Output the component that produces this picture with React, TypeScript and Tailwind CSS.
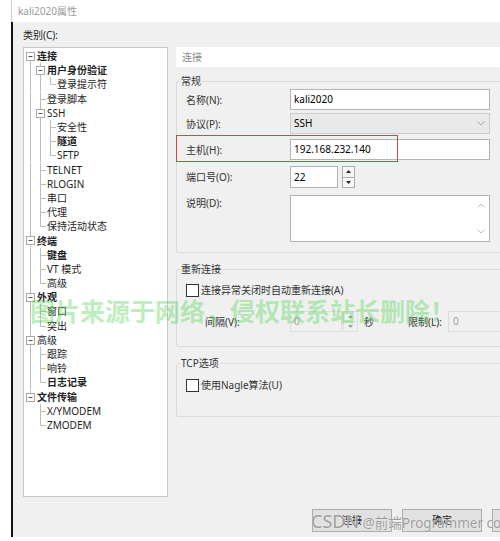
import React from "react";

interface TreeItem {
  label: string;
  level: number;
  bold?: boolean;
  expander?: boolean;
}

const treeItems: TreeItem[] = [
  { label: "连接", level: 0, bold: true, expander: true },
  { label: "用户身份验证", level: 1, bold: true, expander: true },
  { label: "登录提示符", level: 2 },
  { label: "登录脚本", level: 1 },
  { label: "SSH", level: 1, expander: true },
  { label: "安全性", level: 2 },
  { label: "隧道", level: 2, bold: true },
  { label: "SFTP", level: 2 },
  { label: "TELNET", level: 1 },
  { label: "RLOGIN", level: 1 },
  { label: "串口", level: 1 },
  { label: "代理", level: 1 },
  { label: "保持活动状态", level: 1 },
  { label: "终端", level: 0, bold: true, expander: true },
  { label: "键盘", level: 1, bold: true },
  { label: "VT 模式", level: 1 },
  { label: "高级", level: 1 },
  { label: "外观", level: 0, bold: true, expander: true },
  { label: "窗口", level: 1 },
  { label: "突出", level: 1 },
  { label: "高级", level: 0, expander: true },
  { label: "跟踪", level: 1 },
  { label: "响铃", level: 1 },
  { label: "日志记录", level: 1, bold: true },
  { label: "文件传输", level: 0, bold: true, expander: true },
  { label: "X/YMODEM", level: 1 },
  { label: "ZMODEM", level: 1 },
];

const ROW_H = 14.2;

const hasNext = (i: number) => {
  const level = treeItems[i].level;
  for (let j = i + 1; j < treeItems.length; j++) {
    if (treeItems[j].level < level) return false;
    if (treeItems[j].level === level) return true;
  }
  return false;
};

const ancestorHasNext = (i: number, k: number) => {
  for (let j = i - 1; j >= 0; j--) {
    if (treeItems[j].level === k) return hasNext(j);
  }
  return false;
};

const TreeRow: React.FC<{ item: TreeItem; index: number }> = ({ item, index }) => {
  const L = item.level;
  const w = (L + 1) * 10;
  const cx = L * 10 + 4.5;
  const parts: React.ReactNode[] = [];

  for (let k = 0; k < L; k++) {
    if (ancestorHasNext(index, k)) {
      parts.push(<line key={"a" + k} x1={k * 10 + 4.5} x2={k * 10 + 4.5} y1={0} y2={ROW_H} />);
    }
  }
  if (!(L === 0 && index === 0)) parts.push(<line key="t" x1={cx} x2={cx} y1={0} y2={7.5} />);
  if (hasNext(index)) parts.push(<line key="b" x1={cx} x2={cx} y1={7.5} y2={ROW_H} />);
  if (!item.expander) parts.push(<line key="h" x1={cx} x2={L * 10 + 10} y1={7.5} y2={7.5} />);

  return (
    <div className="flex items-center h-[14.2px]">
      <svg width={w} height={ROW_H} className="shrink-0" stroke="#bcbcbc" strokeWidth={1}>
        {parts}
        {item.expander && (
          <g>
            <rect x={L * 10 + 0.5} y={3.5} width={8} height={8} fill="#fff" stroke="#a8a8a8" />
            <line x1={L * 10 + 2.5} x2={L * 10 + 6.5} y1={7.5} y2={7.5} stroke="#555" />
          </g>
        )}
      </svg>
      <span
        className={
          "ml-[1px] text-[10px] leading-[14px] whitespace-nowrap text-[#1e1e1e] " +
          (item.bold ? "font-bold" : "")
        }
      >
        {item.label}
      </span>
    </div>
  );
};

const Chevron: React.FC<{ up?: boolean; color?: string }> = ({ up, color = "#a8a8a8" }) => (
  <svg width="8" height="5" viewBox="0 0 8 5" fill="none" stroke={color} strokeWidth={1}>
    {up ? <polyline points="0.5,4.5 4,1 7.5,4.5" /> : <polyline points="0.5,0.5 4,4 7.5,0.5" />}
  </svg>
);

const Triangle: React.FC<{ up?: boolean; color?: string }> = ({ up, color = "#222" }) => (
  <svg width="5" height="3" viewBox="0 0 5 3" fill={color}>
    {up ? <polygon points="0,3 2.5,0 5,3" /> : <polygon points="0,0 2.5,3 5,0" />}
  </svg>
);

const SpinButtons: React.FC<{ disabled?: boolean; w: string }> = ({ disabled, w }) => (
  <div className={"flex flex-col h-full " + w}>
    <div
      className={
        "flex-1 flex items-center justify-center border " +
        (disabled ? "border-[#dedede] bg-[#f0f0f0]" : "border-[#adadad] bg-[#f7f7f7]")
      }
    >
      <Triangle up color={disabled ? "#a0a0a0" : "#222"} />
    </div>
    <div
      className={
        "flex-1 flex items-center justify-center border border-t-0 " +
        (disabled ? "border-[#dedede] bg-[#f0f0f0]" : "border-[#adadad] bg-[#f7f7f7]")
      }
    >
      <Triangle color={disabled ? "#a0a0a0" : "#222"} />
    </div>
  </div>
);

const labelCls = "w-[104px] shrink-0 text-[10px] leading-[16px] text-[#333] whitespace-nowrap";
const inputCls =
  "w-[200px] border border-[#b4b4b4] bg-white pl-[3px] flex items-center text-[10px] text-black";

const Checkbox: React.FC<{ label: string }> = ({ label }) => (
  <div className="flex items-center h-[16px]">
    <div className="w-[13px] h-[13px] border border-[#333] bg-white shrink-0" />
    <span className="ml-[2px] text-[10px] leading-[16px] text-[#333] whitespace-nowrap">{label}</span>
  </div>
);

const legendCls = "ml-[-6px] px-[1px] text-[10px] leading-[16px] text-[#333]";

export default function App() {
  return (
    <div className="w-[500px] h-[541px] bg-white overflow-hidden relative flex font-['Noto_Sans','Noto_Sans_CJK_SC',sans-serif]">
      <div className="w-[11px] shrink-0" />
      <div className="flex flex-col w-[489px] shrink-0">
        <div className="h-[22px] border-l border-[#cfcfcf] flex items-center pl-[6px] text-[10px] text-[#9a9a9a]">
          kali2020属性
        </div>
        <div className="h-[515px] border-l-2 border-[#141414] bg-[#f0f0f0] flex pl-[10px]">
          {/* 左侧类别树 */}
          <div className="w-[145px] shrink-0 pt-[5px] flex flex-col">
            <div className="h-[16px] text-[10px] leading-[16px] text-[#222]">类别(C):</div>
            <div className="mt-[4px] h-[450px] border border-[#c8c8c8] bg-white pl-[2px] pt-[1px]">
              {treeItems.map((item, i) => (
                <TreeRow key={i} item={item} index={i} />
              ))}
            </div>
          </div>

          {/* 右侧设置 */}
          <div className="ml-[8px] w-[330px] shrink-0 pt-[25px] flex flex-col">
            <div className="h-[20px] bg-white flex items-center pl-[6px] text-[10px] text-[#8a8a8a]">连接</div>

            <fieldset className="mt-[6px] border border-[#dadada] rounded-[2px] px-[9px] pb-[10px]">
              <legend className={legendCls}>常规</legend>
              <div className="flex items-center h-[21px]">
                <span className={labelCls}>名称(N):</span>
                <div className={inputCls + " h-[21px]"}>kali2020</div>
              </div>
              <div className="flex items-center h-[21px] mt-[3px]">
                <span className={labelCls}>协议(P):</span>
                <div className="w-[200px] h-[21px] border border-[#cccccc] bg-[#e9e9e9] pl-[3px] pr-[4px] flex items-center justify-between text-[10px] text-black">
                  <span>SSH</span>
                  <Chevron />
                </div>
              </div>
              <div className="relative flex items-center h-[21px] mt-[5px]">
                <span className={labelCls}>主机(H):</span>
                <div className={inputCls + " h-[21px]"}>192.168.232.140</div>
                <div className="absolute left-[-10px] top-[-4px] w-[222px] h-[27px] border-[1.5px] border-[#c94a48]" />
              </div>
              <div className="flex items-center h-[22px] mt-[6px]">
                <span className={labelCls}>端口号(O):</span>
                <div className="w-[48px] h-[22px] border border-[#b4b4b4] bg-white pl-[3px] flex items-center text-[10px] text-black">
                  22
                </div>
                <div className="ml-[4px] h-[22px]">
                  <SpinButtons w="w-[13px]" />
                </div>
              </div>
              <div className="flex items-start h-[47px] mt-[7px]">
                <span className={labelCls}>说明(D):</span>
                <div className="w-[200px] h-[47px] border border-[#b4b4b4] bg-white flex flex-col items-end justify-between pr-[4px] py-[7px]">
                  <Chevron up color="#c0c0c0" />
                  <Chevron color="#c0c0c0" />
                </div>
              </div>
            </fieldset>

            <fieldset className="mt-[8px] border border-[#dadada] rounded-[2px] px-[9px] pb-[14px]">
              <legend className={legendCls}>重新连接</legend>
              <div className="mt-[5px]">
                <Checkbox label="连接异常关闭时自动重新连接(A)" />
              </div>
              <div className="flex items-center h-[21px] mt-[13px]">
                <span className={labelCls + " pl-[19px]"}>间隔(V):</span>
                <div className="w-[52px] h-[21px] border border-[#dcdcdc] bg-[#f0f0f0] pl-[3px] flex items-center text-[10px] text-[#a0a0a0]">
                  0
                </div>
                <div className="ml-[1px] h-[21px]">
                  <SpinButtons disabled w="w-[15px]" />
                </div>
                <span className="ml-[6px] w-[44px] text-[10px] leading-[16px] text-[#333]">秒</span>
                <span className="w-[40px] text-[10px] leading-[16px] text-[#333] whitespace-nowrap">限制(L):</span>
                <div className="w-[80px] h-[21px] border border-[#dcdcdc] bg-[#f0f0f0] pl-[4px] flex items-center text-[10px] text-[#a0a0a0]">
                  0
                </div>
              </div>
            </fieldset>

            <fieldset className="mt-[8px] border border-[#dadada] rounded-[2px] px-[9px] pb-[23px]">
              <legend className={legendCls}>TCP选项</legend>
              <div className="mt-[6px]">
                <Checkbox label="使用Nagle算法(U)" />
              </div>
            </fieldset>

            <div className="mt-[92px] ml-[136px] flex gap-[10px]">
              <button className="w-[80px] h-[23px] shrink-0 border border-[#adadad] bg-[#e1e1e1] text-[10px] text-[#222]">
                连接
              </button>
              <button className="w-[80px] h-[23px] shrink-0 border border-[#adadad] bg-[#e1e1e1] text-[10px] text-[#222]">
                确定
              </button>
              <button className="w-[80px] h-[23px] shrink-0 border border-[#adadad] bg-[#e1e1e1] text-[10px] text-[#222]">
                取消
              </button>
            </div>
          </div>
        </div>
      </div>

      {/* 水印 */}
      <div className="absolute left-[30px] top-[299px] text-[25px] leading-[25px] font-bold text-[#52d452]/40 whitespace-nowrap pointer-events-none">
        图片来源于网络，侵权联系站长删除！
      </div>
      <div className="absolute left-[311px] top-[510px] leading-[22px] text-[#9c9c9c] whitespace-nowrap pointer-events-none [text-shadow:0_0_1px_#ffffff]">
        <span className="text-[18px]">CSDN</span>
        <span className="text-[13.5px]"> @前端Programmer coding</span>
      </div>
    </div>
  );
}
